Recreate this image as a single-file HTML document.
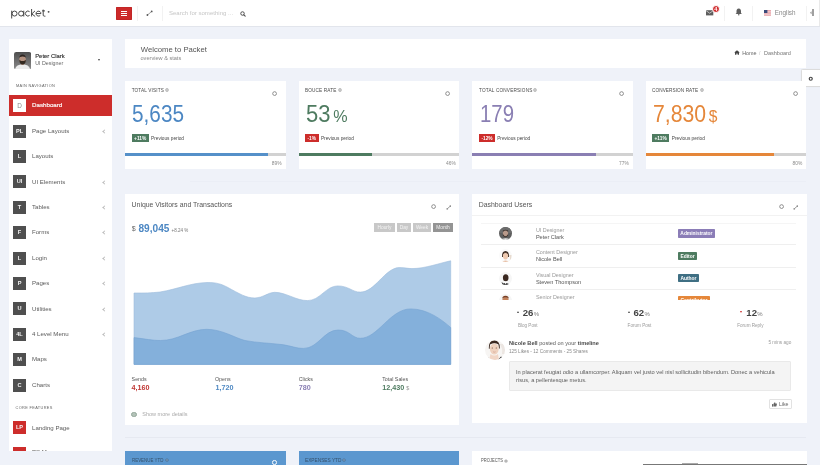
<!DOCTYPE html>
<html><head><meta charset="utf-8">
<style>
*{box-sizing:border-box;margin:0;padding:0}
html,body{width:820px;height:465px;overflow:hidden;background:#eff2f9;font-family:"Liberation Sans",sans-serif;color:#555}
.a{position:absolute;white-space:nowrap}
.card{position:absolute;background:#fff}
.hdr{position:absolute;left:0;top:0;width:820px;height:27px;background:#fff;border-bottom:1px solid #e2e5ec}
.sep{position:absolute;top:6px;width:0.7px;height:15px;background:#f2f2f2}
.ico{position:absolute;left:13px;width:13px;height:13px;background:#4f4f4f;color:#f4f4f4;font-size:5.6px;font-weight:bold;text-align:center;line-height:13px}
.nav{position:absolute;left:32px;font-size:6.1px;color:#5a5a5a;line-height:8px}
.chev{position:absolute;left:102.6px;width:3px;height:3px;border-left:0.6px solid #bbb;border-bottom:0.6px solid #bbb;transform:rotate(45deg)}
.lbl{position:absolute;font-size:4.2px;letter-spacing:0.45px;color:#555;line-height:5px}
.big{position:absolute;font-size:21px;line-height:24px}
.badge{position:absolute;height:8.3px;color:#fff;font-size:4.8px;font-weight:bold;line-height:9.7px;text-align:center}
.prev{position:absolute;font-size:4.75px;color:#484848;line-height:6px}
.bar{position:absolute;height:2.8px;background:#d2d2d2}
.bar i{position:absolute;left:0;top:0;height:100%}
.pct{position:absolute;font-size:4.9px;color:#8a8a8a;line-height:5px}
.circ{position:absolute;width:4.6px;height:4.6px;border:0.9px solid #666;border-radius:50%}
</style></head><body><div id="w" style="position:absolute;left:0;top:0;width:820px;height:465px;overflow:hidden;will-change:transform">

<!-- HEADER -->
<div class="hdr"></div>
<svg class="a" style="left:0;top:0" width="60" height="26" viewBox="0 0 60 26"><g fill="none" stroke="#3e3e3e" stroke-width="0.95">
<path d="M11.7 10.7 L11.7 18.5"/><circle cx="14.55" cy="13.55" r="2.5"/>
<circle cx="21.1" cy="13.55" r="2.5"/><path d="M23.75 10.7 L23.75 16.5"/>
<path d="M29.6 11.7 A2.5 2.5 0 1 0 29.6 15.4"/>
<path d="M31.6 9 L31.6 16.5 M35 10.9 L31.8 13.9 L35.2 16.5"/>
<path d="M36.2 13.55 L40.95 13.55 A2.45 2.45 0 1 0 40.2 15.4"/>
<path d="M43.2 9.6 L43.2 15.2 Q43.2 16.2 44.6 16.2 L45.4 16.2 M42 10.9 L45 10.9"/>
</g><circle cx="48.6" cy="11.85" r="0.95" fill="#4a4a4a"/></svg>
<div class="a" style="left:116.4px;top:7px;width:15.4px;height:13px;background:#cc2a2a;border-radius:1px;box-shadow:inset 0 0 0 0.5px #b82222"></div>
<div class="a" style="left:121.3px;top:10.7px;width:5.8px;height:1px;background:#fff"></div>
<div class="a" style="left:121.3px;top:12.8px;width:5.8px;height:1px;background:#fff"></div>
<div class="a" style="left:121.3px;top:14.9px;width:5.8px;height:1px;background:#fff"></div>
<div class="sep" style="left:136.5px"></div>
<svg class="a" style="left:146px;top:9.5px" width="7" height="7" viewBox="0 0 7 7"><path d="M1.5 5 L5.6 1.5" stroke="#666" stroke-width="0.6"/><circle cx="1.4" cy="5" r="0.9" fill="#555"/><circle cx="5.7" cy="1.4" r="0.9" fill="#555"/></svg>
<div class="sep" style="left:162.3px"></div>
<div class="a" style="left:168.9px;top:10px;font-size:6.05px;line-height:7px;color:#c6c6c6">Search for something ...</div>
<svg class="a" style="left:239.8px;top:10.9px" width="6" height="6" viewBox="0 0 6 6"><circle cx="2.5" cy="2.5" r="1.75" stroke="#505050" stroke-width="1" fill="none"/><path d="M3.8 3.8 L5.2 5.2" stroke="#505050" stroke-width="1.1" stroke-linecap="round"/></svg>

<svg class="a" style="left:706px;top:9.6px" width="8" height="6" viewBox="0 0 8 6"><rect x="0" y="0.2" width="7.3" height="5.2" fill="#5e5e5e"/><path d="M0 0.6 L3.65 3.2 L7.3 0.6" stroke="#fff" stroke-width="0.6" fill="none"/></svg>
<div class="a" style="left:711.6px;top:4.6px;width:8.6px;height:8.6px;border-radius:50%;background:#cf2a2c;border:0.7px solid #fff;color:#fff;font-size:5.6px;font-weight:bold;text-align:center;line-height:7.4px">4</div>
<div class="sep" style="left:724px"></div>
<svg class="a" style="left:735px;top:8.3px" width="7.5" height="8" viewBox="0 0 7.5 8"><path d="M3.75 0.6 C2 0.6 1.5 2 1.5 3.4 L1.5 5 L0.6 6.1 L6.9 6.1 L6 5 L6 3.4 C6 2 5.5 0.6 3.75 0.6Z" fill="#5e5e5e"/><circle cx="3.75" cy="6.8" r="0.75" fill="#5e5e5e"/></svg>
<div class="sep" style="left:752px"></div>
<svg class="a" style="left:763.5px;top:9.8px" width="7.5" height="5.8" viewBox="0 0 7.5 5.8"><rect width="7.5" height="5.8" fill="#e8a0a6"/><rect y="0.9" width="7.5" height="0.8" fill="#f4d5d8"/><rect y="2.6" width="7.5" height="0.8" fill="#f4d5d8"/><rect y="4.3" width="7.5" height="0.8" fill="#f4d5d8"/><rect width="3.4" height="3" fill="#3b4a7a"/></svg>
<div class="a" style="left:774.8px;top:9.3px;font-size:6.3px;line-height:7px;color:#888">English</div>
<div class="sep" style="left:805.8px"></div>
<svg class="a" style="left:809.5px;top:11px" width="2" height="3.6" viewBox="0 0 2 3.6"><path d="M0 1.8 L1.6 0.3 L1.6 3.3Z" fill="#999"/></svg>
<div class="a" style="left:812.3px;top:9.3px;width:1.4px;height:6.5px;background:#a0a0a0"></div>
<div class="a" style="left:819px;top:0;width:1px;height:26px;background:#e9e9e9"></div>

<!-- SIDEBAR -->
<div class="card" style="left:9px;top:39.2px;width:103.1px;height:412.2px"></div>
<svg class="a" style="left:13.7px;top:51.8px" width="17.2" height="17.4" viewBox="0 0 17.2 17.4"><defs><clipPath id="av1"><rect width="17.2" height="17.4" rx="2.2"/></clipPath><linearGradient id="g1" x1="0" y1="0" x2="0" y2="1"><stop offset="0" stop-color="#4e4e4e"/><stop offset="1" stop-color="#8a8a8a"/></linearGradient></defs><g clip-path="url(#av1)"><rect width="17.2" height="17.4" fill="url(#g1)"/><path d="M1 17.4 Q2 12.5 8.6 12.2 Q15.2 12.5 16.2 17.4Z" fill="#ececec"/><rect x="7.2" y="10" width="2.8" height="3" fill="#b89484"/><ellipse cx="8.6" cy="7.6" rx="3.3" ry="4.1" fill="#b3917f"/><path d="M5.3 6.2 Q5.5 2.6 8.6 2.6 Q11.7 2.6 11.9 6.2 L11.2 5 Q8.6 3.8 6 5Z" fill="#2e2622"/><path d="M5.3 7.8 Q5.4 12.6 8.6 12.6 Q11.8 12.6 11.9 7.8 L11 8.6 Q8.6 9.6 6.2 8.6Z" fill="#33291f"/></g></svg>
<div class="a" style="left:35.2px;top:52.6px;font-size:5.9px;line-height:6px;color:#2a2a2a;-webkit-text-stroke:0.12px #2a2a2a">Peter Clark</div>
<div class="a" style="left:35.2px;top:60px;font-size:5.3px;line-height:6px;color:#666">UI Designer</div>
<div class="a" style="left:97.5px;top:59.3px;width:0;height:0;border-left:1.8px solid transparent;border-right:1.8px solid transparent;border-top:2px solid #444"></div>
<div class="lbl" style="left:16px;top:82.8px;font-size:3.9px;letter-spacing:0.33px;color:#666">MAIN NAVIGATION</div>

<div class="a" style="left:9px;top:95.1px;width:103px;height:20.7px;background:#cd2d2b"></div>
<div class="ico" style="top:99.1px;background:#fff;color:#888;font-weight:normal;font-size:6.4px">D</div>
<div class="nav" style="top:101.0px;color:#fff;font-size:6.2px;-webkit-text-stroke:0.15px #fff">Dashboard</div>

<div class="ico" style="top:124.6px">PL</div><div class="nav" style="top:126.7px">Page Layouts</div><div class="chev" style="top:129.8px"></div>
<div class="ico" style="top:150px">L</div><div class="nav" style="top:152.1px">Layouts</div>
<div class="ico" style="top:175.4px">UI</div><div class="nav" style="top:177.5px">UI Elements</div><div class="chev" style="top:180.6px"></div>
<div class="ico" style="top:200.8px">T</div><div class="nav" style="top:202.9px">Tables</div><div class="chev" style="top:206px"></div>
<div class="ico" style="top:226.2px">F</div><div class="nav" style="top:228.3px">Forms</div><div class="chev" style="top:231.4px"></div>
<div class="ico" style="top:251.6px">L</div><div class="nav" style="top:253.7px">Login</div><div class="chev" style="top:256.8px"></div>
<div class="ico" style="top:277px">P</div><div class="nav" style="top:279.1px">Pages</div><div class="chev" style="top:282.2px"></div>
<div class="ico" style="top:302.4px">U</div><div class="nav" style="top:304.5px">Utilities</div><div class="chev" style="top:307.6px"></div>
<div class="ico" style="top:327.8px">4L</div><div class="nav" style="top:329.9px">4 Level Menu</div><div class="chev" style="top:333px"></div>
<div class="ico" style="top:353.2px">M</div><div class="nav" style="top:355.3px">Maps</div>
<div class="ico" style="top:378.6px">C</div><div class="nav" style="top:380.7px">Charts</div>
<div class="lbl" style="left:15.6px;top:405.2px;font-size:3.9px;letter-spacing:0.33px;color:#666">CORE FEATURES</div>
<div class="ico" style="top:421.4px;background:#cd2d2b">LP</div><div class="nav" style="top:423.5px">Landing Page</div>
<div style="position:absolute;left:9px;top:440px;width:103px;height:11.4px;overflow:hidden">
 <div class="ico" style="left:4px;top:7px;background:#cd2d2b">PS</div><div class="nav" style="left:23px;top:8.1px">PS Menu</div>
</div>

<!-- WELCOME -->
<div class="card" style="left:124.8px;top:39.2px;width:681.2px;height:28.8px"></div>
<div class="a" style="left:140.8px;top:45px;font-size:7.7px;line-height:9px;color:#555">Welcome to Packet</div>
<div class="a" style="left:140.5px;top:55px;font-size:5.6px;line-height:6px;color:#888">overview &amp; stats</div>
<svg class="a" style="left:733.8px;top:50.4px" width="6" height="5" viewBox="0 0 6 5"><path d="M3 0.2 L0.2 2.6 L1 2.6 L1 4.8 L2.4 4.8 L2.4 3.4 L3.6 3.4 L3.6 4.8 L5 4.8 L5 2.6 L5.8 2.6Z" fill="#444"/></svg>
<div class="a" style="left:742.2px;top:50.2px;font-size:5.4px;line-height:6px;color:#666">Home</div>
<div class="a" style="left:759px;top:50.2px;font-size:5px;line-height:6px;color:#bbb">/</div>
<div class="a" style="left:764px;top:50.2px;font-size:5.5px;line-height:6px;color:#777">Dashboard</div>
<div class="a" style="left:800.5px;top:69.4px;width:22px;height:18px;background:#fff;border:0.8px solid #dcdcdc;border-radius:1.5px;box-shadow:0 0 1px rgba(0,0,0,0.08)"></div>
<svg class="a" style="left:807.5px;top:75.8px" width="5.5" height="5.5" viewBox="0 0 5.5 5.5"><circle cx="2.75" cy="2.75" r="2.1" fill="#444"/><circle cx="2.75" cy="2.75" r="0.9" fill="#fff"/></svg>

<!-- STAT CARDS -->
<div class="card" style="left:125px;top:81px;width:160.5px;height:88px"></div>
<div class="a" style="left:131.7px;top:87.8px;font-size:4.7px;line-height:6px;color:#4a4a4a;letter-spacing:0.131px">TOTAL VISITS</div>
<svg class="a" style="left:165.2px;top:88.1px" width="4" height="4" viewBox="0 0 4 4"><circle cx="2" cy="2" r="1.65" fill="#999"/><circle cx="2" cy="2" r="0.9" fill="#ddd"/></svg>
<svg class="a" style="left:271.9px;top:91.3px" width="5.2" height="5.2" viewBox="0 0 5.2 5.2"><circle cx="2.6" cy="2.6" r="1.9" stroke="#707070" stroke-width="0.75" fill="none"/></svg>
<div class="a" style="left:132.29999999999998px;top:100.6px;font-size:23.2px;line-height:26px;color:#4c87c3;transform-origin:0 0;transform:scaleX(0.896)">5,635</div>
<div class="badge" style="left:131.6px;top:134.1px;width:17.2px;background:#4e7b60">+11%</div>
<div class="prev" style="left:151px;top:135.5px">Previous period</div>
<div class="bar" style="left:125px;top:153.2px;width:160.5px"><i style="width:143.2px;background:#5590c9"></i></div>
<div class="pct" style="left:271.8px;top:160.8px">89%</div>

<div class="card" style="left:298.5px;top:81px;width:160.5px;height:88px"></div>
<div class="a" style="left:304.9px;top:87.8px;font-size:4.7px;line-height:6px;color:#4a4a4a;letter-spacing:0.159px">BOUCE RATE</div>
<svg class="a" style="left:337.8px;top:88.1px" width="4" height="4" viewBox="0 0 4 4"><circle cx="2" cy="2" r="1.65" fill="#999"/><circle cx="2" cy="2" r="0.9" fill="#ddd"/></svg>
<svg class="a" style="left:445.4px;top:91.3px" width="5.2" height="5.2" viewBox="0 0 5.2 5.2"><circle cx="2.6" cy="2.6" r="1.9" stroke="#707070" stroke-width="0.75" fill="none"/></svg>
<div class="a" style="left:305.5px;top:100.6px;font-size:23.2px;line-height:26px;color:#4e7b60;transform-origin:0 0;transform:scaleX(0.949)">53<span style="font-size:17px;margin-left:3px">%</span></div>
<div class="badge" style="left:304.9px;top:134.1px;width:13.8px;background:#cd2d2b">-1%</div>
<div class="prev" style="left:320.9px;top:135.5px">Previous period</div>
<div class="bar" style="left:298.5px;top:153.2px;width:160.5px"><i style="width:73.8px;background:#4e7b60"></i></div>
<div class="pct" style="left:446px;top:160.8px">46%</div>

<div class="card" style="left:472px;top:81px;width:160.5px;height:88px"></div>
<div class="a" style="left:479px;top:87.8px;font-size:4.7px;line-height:6px;color:#4a4a4a;letter-spacing:0.184px">TOTAL CONVERSIONS</div>
<svg class="a" style="left:533.2px;top:88.1px" width="4" height="4" viewBox="0 0 4 4"><circle cx="2" cy="2" r="1.65" fill="#999"/><circle cx="2" cy="2" r="0.9" fill="#ddd"/></svg>
<svg class="a" style="left:619.0px;top:91.3px" width="5.2" height="5.2" viewBox="0 0 5.2 5.2"><circle cx="2.6" cy="2.6" r="1.9" stroke="#707070" stroke-width="0.75" fill="none"/></svg>
<div class="a" style="left:479.6px;top:100.6px;font-size:23.2px;line-height:26px;color:#8a7fb3;transform-origin:0 0;transform:scaleX(0.878)">179</div>
<div class="badge" style="left:479px;top:134.1px;width:16px;background:#cd2d2b">-12%</div>
<div class="prev" style="left:497.2px;top:135.5px">Previous period</div>
<div class="bar" style="left:472px;top:153.2px;width:160.5px"><i style="width:123.6px;background:#8a7fb3"></i></div>
<div class="pct" style="left:619px;top:160.8px">77%</div>

<div class="card" style="left:645.5px;top:81px;width:160.5px;height:88px"></div>
<div class="a" style="left:652px;top:87.8px;font-size:4.7px;line-height:6px;color:#4a4a4a;letter-spacing:0.074px">CONVERSION RATE</div>
<svg class="a" style="left:699.7px;top:88.1px" width="4" height="4" viewBox="0 0 4 4"><circle cx="2" cy="2" r="1.65" fill="#999"/><circle cx="2" cy="2" r="0.9" fill="#ddd"/></svg>
<svg class="a" style="left:792.6px;top:91.3px" width="5.2" height="5.2" viewBox="0 0 5.2 5.2"><circle cx="2.6" cy="2.6" r="1.9" stroke="#707070" stroke-width="0.75" fill="none"/></svg>
<div class="a" style="left:652.6px;top:100.6px;font-size:23.2px;line-height:26px;color:#e5873a;transform-origin:0 0;transform:scaleX(0.915)">7,830<span style="font-size:17px;margin-left:3px">$</span></div>
<div class="badge" style="left:652px;top:134.1px;width:17.2px;background:#4e7b60">+11%</div>
<div class="prev" style="left:671.8px;top:135.5px">Previous period</div>
<div class="bar" style="left:645.5px;top:153.2px;width:160.5px"><i style="width:128.4px;background:#e5873a"></i></div>
<div class="pct" style="left:792.5px;top:160.8px">80%</div>

<!-- CHART CARD -->
<div class="card" style="left:124.8px;top:193.6px;width:334.7px;height:231px"></div>
<div class="a" style="left:131.6px;top:199.8px;font-size:6.9px;line-height:9px;color:#555">Unique Visitors and Transactions</div>
<svg class="a" style="left:431.4px;top:204.4px" width="5.2" height="5.2" viewBox="0 0 5.2 5.2"><circle cx="2.6" cy="2.6" r="1.9" stroke="#707070" stroke-width="0.75" fill="none"/></svg>
<svg class="a" style="left:445.8px;top:204.5px" width="5.5" height="5" viewBox="0 0 5.5 5"><path d="M1.2 3.9 L4.3 1.1" stroke="#555" stroke-width="0.6"/><path d="M0.5 4.6 L0.8 2.9 L2.2 4.3Z M5 0.4 L4.7 2.1 L3.3 0.7Z" fill="#555"/></svg>
<div class="a" style="left:131.8px;top:225.4px;font-size:7px;line-height:8px;color:#666">$</div>
<div class="a" style="left:138.5px;top:223.2px;font-size:10.1px;line-height:12px;color:#4c87c3;font-weight:bold">89,045</div>
<div class="a" style="left:171.6px;top:227.8px;font-size:4.5px;line-height:6px;color:#777">+8.24 %</div>
<div class="a" style="left:374px;top:222.9px;width:20.9px;height:8.7px;background:#c8c8c8;color:#f4f4f4;font-size:4.8px;line-height:9.2px;text-align:center">Hourly</div>
<div class="a" style="left:396.9px;top:222.9px;width:14.1px;height:8.7px;background:#c8c8c8;color:#f4f4f4;font-size:4.8px;line-height:9.2px;text-align:center">Day</div>
<div class="a" style="left:413px;top:222.9px;width:18px;height:8.7px;background:#c8c8c8;color:#f4f4f4;font-size:4.8px;line-height:9.2px;text-align:center">Week</div>
<div class="a" style="left:433.1px;top:222.9px;width:19.7px;height:8.7px;background:#949494;color:#f4f4f4;font-size:4.8px;line-height:9.2px;text-align:center">Month</div>

<svg class="a" style="left:0;top:0" width="820" height="465" viewBox="0 0 820 465">
<path id="light" fill="#aecbe7" stroke="#9dbcdc" stroke-width="0.6" d="M134 293 C146 293 150 293 160 292 C178 289 190 283 207 282.5 C217 282.5 221 284 227 287 C240 294 246 298 255 298 C263 298 268 292.3 274.5 292.3 C286 292.3 296 300.6 307.5 300.6 C320 300.6 326 285.9 337.5 285.9 C349 285.9 352 292.1 360.3 292.1 C375 292.1 385 268 399 267.6 C405 267.5 408 268.6 412 268.6 C425 268.6 440 263 450.7 260.8 L450.7 364.4 L134 364.4Z"/>
<path id="dark" fill="#84b0db" stroke="#76a3d1" stroke-width="0.6" d="M134 337.6 C146 339 152 340.5 160.5 340.5 C178 340.5 190 329.3 206.7 329.3 C222 329.3 235 338 245 340.5 C258 343 270 343 282 344.6 C292 346 296 348.4 303.6 348.4 C318 348.4 324 330 338 330 C350 330 352 338.3 360.3 338.3 C378 338.3 390 308.9 410.7 308.9 C428 308.9 442 320 450.7 327.5 L450.7 364.4 L134 364.4Z"/>
</svg>

<div class="a" style="left:131.6px;top:375.8px;font-size:5.3px;line-height:6px;color:#555">Sends</div>
<div class="a" style="left:131.6px;top:383.5px;font-size:7.2px;line-height:8px;color:#bf3532;font-weight:bold">4,160</div>
<div class="a" style="left:215px;top:375.8px;font-size:5.3px;line-height:6px;color:#555">Opens</div>
<div class="a" style="left:215.5px;top:383.5px;font-size:7.2px;line-height:8px;color:#4e88c2;font-weight:bold">1,720</div>
<div class="a" style="left:298.8px;top:375.8px;font-size:5.3px;line-height:6px;color:#555">Clicks</div>
<div class="a" style="left:298.8px;top:383.5px;font-size:7.2px;line-height:8px;color:#8a7fb3;font-weight:bold">780</div>
<div class="a" style="left:382.2px;top:375.8px;font-size:5.3px;line-height:6px;color:#555">Total Sales</div>
<div class="a" style="left:382.2px;top:383.5px;font-size:7.2px;line-height:8px;color:#4e7b60;font-weight:bold">12,430 <span style="font-weight:normal;color:#999;font-size:5.5px">$</span></div>
<div class="a" style="left:131.4px;top:411.7px;width:5.2px;height:5.2px;border-radius:50%;background:#b3c2b8;border:0.9px solid #92a699"></div>
<div class="a" style="left:142.3px;top:410.8px;font-size:5.5px;line-height:6.5px;color:#aaa">Show more details</div>

<!-- USERS CARD -->
<div class="card" style="left:472px;top:193.6px;width:334.8px;height:229.9px"></div>
<div class="a" style="left:478.7px;top:200.2px;font-size:6.9px;line-height:9px;color:#555">Dashboard Users</div>
<svg class="a" style="left:778.5px;top:204.3px" width="5.2" height="5.2" viewBox="0 0 5.2 5.2"><circle cx="2.6" cy="2.6" r="1.9" stroke="#707070" stroke-width="0.75" fill="none"/></svg>
<svg class="a" style="left:792.6px;top:204.5px" width="5.5" height="5" viewBox="0 0 5.5 5"><path d="M1.2 3.9 L4.3 1.1" stroke="#555" stroke-width="0.6"/><path d="M0.5 4.6 L0.8 2.9 L2.2 4.3Z M5 0.4 L4.7 2.1 L3.3 0.7Z" fill="#555"/></svg>
<div class="a" style="left:472px;top:215.2px;width:334.8px;height:0.7px;background:#f2f2f2"></div>
<div style="position:absolute;left:481.3px;top:223px;width:315px;height:76.7px;overflow:hidden">
 <div class="a" style="left:0;top:0px;width:315px;height:0.7px;background:#f5f5f5"></div>
 <div class="a" style="left:0;top:21.2px;width:315px;height:0.7px;background:#efefef"></div>
 <div class="a" style="left:0;top:43.9px;width:315px;height:0.7px;background:#efefef"></div>
 <div class="a" style="left:0;top:66.4px;width:315px;height:0.7px;background:#efefef"></div>
 <svg class="a" style="left:18.0px;top:3.7px" width="13" height="13" viewBox="0 0 13 13"><defs><clipPath id="c1"><circle cx="6.5" cy="6.5" r="6.5"/></clipPath></defs><g clip-path="url(#c1)"><rect width="13" height="13" fill="#5e5e5e"/><path d="M0 0 L13 0 L13 6 L0 6Z" fill="#6c6c6c"/><ellipse cx="6.5" cy="6.6" rx="2.6" ry="3.3" fill="#b8998a"/><path d="M3.9 5 Q6.5 2.2 9.1 5 L9.1 3.6 Q6.5 2 3.9 3.6Z" fill="#3b302b"/><path d="M3.9 7 Q6.5 11.5 9.1 7 L9.1 8.8 Q6.5 11.5 3.9 8.8Z" fill="#3b302b"/><path d="M0.5 13 Q6.5 9.3 12.5 13Z" fill="#eeeeee"/></g></svg>
 <div class="a" style="left:54.6px;top:3.8px;font-size:5.4px;line-height:6px;color:#9a9a9a">UI Designer</div>
 <div class="a" style="left:54.6px;top:11px;font-size:5.6px;line-height:6px;color:#555">Peter Clark</div>
 <div class="badge" style="left:196.8px;top:6px;width:36.6px;background:#8b7db7;border-radius:0.8px;height:8.5px;line-height:9.1px;font-size:4.9px">Administrator</div>
 <svg class="a" style="left:18.0px;top:26.0px" width="13" height="13" viewBox="0 0 13 13"><defs><clipPath id="c2"><circle cx="6.5" cy="6.5" r="6.5"/></clipPath></defs><g clip-path="url(#c2)"><rect width="13" height="13" fill="#fafafa"/><path d="M3 8 Q2.8 2 6.5 2 Q10.2 2 10 8Z" fill="#3a2a22"/><ellipse cx="6.5" cy="7" rx="2.6" ry="3.4" fill="#eec9b0"/><path d="M3.9 5 Q6.5 3 9.1 5 L9.1 3.8 Q6.5 2.6 3.9 3.8Z" fill="#3a2a22"/><path d="M2 13 Q6.5 9.8 11 13Z" fill="#e8c0a6"/><path d="M10 6 Q12 9 10.5 12 L12.5 12 L12.5 6Z" fill="#e8dcd0"/></g></svg>
 <div class="a" style="left:54.6px;top:26.1px;font-size:5.4px;line-height:6px;color:#9a9a9a">Content Designer</div>
 <div class="a" style="left:54.6px;top:33.4px;font-size:5.6px;line-height:6px;color:#555">Nicole Bell</div>
 <div class="badge" style="left:196.8px;top:28.6px;width:18.9px;background:#4e7b60;border-radius:0.8px;height:8.5px;line-height:9.1px;font-size:4.9px">Editor</div>
 <svg class="a" style="left:18.0px;top:48.7px" width="13" height="13" viewBox="0 0 13 13"><defs><clipPath id="c3"><circle cx="6.5" cy="6.5" r="6.5"/></clipPath></defs><g clip-path="url(#c3)"><rect width="13" height="13" fill="#f6f6f6"/><ellipse cx="6.7" cy="5.8" rx="2.8" ry="3.5" fill="#3a2820"/><path d="M1.5 13 Q6.5 9 11.5 13Z" fill="#2a2a2a"/><path d="M5.6 9.8 L6.6 13 L7.6 9.8Z" fill="#fff"/><path d="M2.5 10 L4.2 11.2 L3.5 12.2Z" fill="#222"/></g></svg>
 <div class="a" style="left:54.6px;top:48.8px;font-size:5.4px;line-height:6px;color:#9a9a9a">Visual Designer</div>
 <div class="a" style="left:54.6px;top:56.1px;font-size:5.6px;line-height:6px;color:#555">Steven Thompson</div>
 <div class="badge" style="left:196.8px;top:50.9px;width:20.8px;background:#3f6f83;border-radius:0.8px;height:8.5px;line-height:9.1px;font-size:4.9px">Author</div>
 <svg class="a" style="left:18.0px;top:71.0px" width="13" height="13" viewBox="0 0 13 13"><defs><clipPath id="c4"><circle cx="6.5" cy="6.5" r="6.5"/></clipPath></defs><g clip-path="url(#c4)"><rect width="13" height="13" fill="#f6f6f6"/><ellipse cx="6.5" cy="7" rx="3.2" ry="3.8" fill="#c4825a"/><path d="M3 6 Q3 1.8 6.5 1.8 Q10 1.8 10 6 L10 4.5 Q6.5 2.6 3 4.5Z" fill="#7a3f22"/></g></svg>
 <div class="a" style="left:54.6px;top:70.7px;font-size:5.4px;line-height:6px;color:#9a9a9a">Senior Designer</div>
 <div class="a" style="left:54.6px;top:78px;font-size:5.6px;line-height:6px;color:#555">Chris Evans</div>
 <div class="badge" style="left:196.8px;top:72.9px;width:31.8px;background:#e5873a;border-radius:0.8px;height:8.5px;line-height:9.1px;font-size:4.9px">Contributor</div>
</div>

<!-- user stats -->
<div class="a" style="left:517.1px;top:311px;width:0;height:0;border-left:1.6px solid transparent;border-right:1.6px solid transparent;border-bottom:2.1px solid #444"></div>
<div class="a" style="left:522.7px;top:306.6px;font-size:9.6px;line-height:12px;color:#444;font-weight:bold">26<span style="font-size:6px;font-weight:normal;color:#777;margin-left:0.3px">%</span></div>
<div class="a" style="left:517.9px;top:322.5px;font-size:4.6px;line-height:6px;color:#9a9a9a">Blog Post</div>
<div class="a" style="left:627.9px;top:311px;width:0;height:0;border-left:1.6px solid transparent;border-right:1.6px solid transparent;border-bottom:2.1px solid #444"></div>
<div class="a" style="left:633.5px;top:306.6px;font-size:9.6px;line-height:12px;color:#444;font-weight:bold">62<span style="font-size:6px;font-weight:normal;color:#777;margin-left:0.3px">%</span></div>
<div class="a" style="left:627.6px;top:322.5px;font-size:4.6px;line-height:6px;color:#9a9a9a">Forum Post</div>
<div class="a" style="left:740.2px;top:311.1px;width:0;height:0;border-left:1.6px solid transparent;border-right:1.6px solid transparent;border-top:2.1px solid #cd2d2b"></div>
<div class="a" style="left:746.3px;top:306.6px;font-size:9.6px;line-height:12px;color:#444;font-weight:bold">12<span style="font-size:6px;font-weight:normal;color:#777;margin-left:0.3px">%</span></div>
<div class="a" style="left:737.2px;top:322.5px;font-size:4.6px;line-height:6px;color:#9a9a9a">Forum Reply</div>

<!-- post -->
<svg class="a" style="left:484.9px;top:339.9px" width="20" height="20" viewBox="0 0 20 20"><defs><clipPath id="c5"><circle cx="10" cy="10" r="10"/></clipPath></defs><g clip-path="url(#c5)"><rect width="20" height="20" fill="#f7f5f3"/><path d="M14.5 4 Q18 8 17 14 L20 14 L20 4Z" fill="#ece6e2"/><path d="M3.8 8.5 Q3.6 0.3 9.4 0.5 Q15 0.5 14.8 8 L14 9 L13.5 4.5 Q9.5 2 5 4.5 L4.6 9Z" fill="#3a2820"/><ellipse cx="9.3" cy="9" rx="4.4" ry="5.6" fill="#efd2bf"/><path d="M5.5 14 Q9.3 17 13 14 L14 20 L4 20Z" fill="#f1d6c6"/><ellipse cx="7.3" cy="8" rx="0.8" ry="0.45" fill="#6b4a3a"/><ellipse cx="11.3" cy="8" rx="0.8" ry="0.45" fill="#6b4a3a"/><path d="M8 11.8 Q9.3 12.5 10.6 11.8" stroke="#c98e80" stroke-width="0.5" fill="none"/><path d="M13 20 L16 16.5 L17.5 17.5 L15 20Z" fill="#2a2a2a"/><path d="M2 19 L3.8 17.5 L4.4 18.5Z" fill="#333"/></g></svg>
<div class="a" style="left:509px;top:340.3px;font-size:5.6px;line-height:7px;color:#5a5a5a"><b style="color:#4a4a4a">Nicole Bell</b> posted on your <b style="color:#4a4a4a">timeline</b></div>
<div class="a" style="left:509px;top:349.1px;font-size:4.7px;line-height:6px;color:#8a8a8a">125 Likes - 12 Comments - 25 Shares</div>
<div class="a" style="left:768.4px;top:340.3px;font-size:4.7px;line-height:6px;color:#999">5 mins ago</div>
<div class="a" style="left:509px;top:361.4px;width:282.4px;height:29.2px;background:#f4f4f4;border:0.6px solid #e9e9e9;border-radius:1px"></div>
<div class="a" style="left:516px;top:368.8px;font-size:5.68px;line-height:7.8px;color:#606060">In placerat feugiat odio a ullamcorper. Aliquam vel justo vel nisl sollicitudin bibendum. Donec a vehicula<br>risus, a pellentesque metus.</div>
<div class="a" style="left:769.3px;top:399.1px;width:22.4px;height:9.5px;background:#fff;border:0.6px solid #e2e2e2;border-radius:1px"></div>
<svg class="a" style="left:772px;top:401.5px" width="5" height="5" viewBox="0 0 5 5"><rect x="0" y="2.1" width="1.1" height="2.5" fill="#666"/><path d="M1.4 2.1 L2.7 0.2 Q3.5 0.1 3.3 1.5 L4.7 1.5 Q5 1.7 4.9 2.2 L4.3 4.6 L1.4 4.6Z" fill="#666"/></svg>
<div class="a" style="left:778.9px;top:400.8px;font-size:5.2px;line-height:6.5px;color:#666">Like</div>

<!-- separator -->
<div class="a" style="left:190px;top:181px;width:616px;height:0.5px;background:#e8ebf3;opacity:0.6"></div>
<div class="a" style="left:125px;top:437px;width:681px;height:0.6px;background:#e6e9f1"></div>

<!-- BOTTOM CARDS -->
<div class="a" style="left:125px;top:450.5px;width:160.5px;height:20px;background:#5b97cf"></div>
<div class="a" style="left:131.7px;top:457.6px;font-size:4.9px;line-height:6px;color:#34506b;transform-origin:0 0;transform:scaleX(0.906)">REVENUE YTD</div><svg class="a" style="left:165.3px;top:458.1px" width="4" height="4" viewBox="0 0 4 4"><circle cx="2" cy="2" r="1.6" fill="#4a6a88"/><circle cx="2" cy="2" r="0.8" fill="#8fb5da"/></svg>
<div class="circ" style="left:272.2px;top:460.3px;border-color:#fff"></div>
<div class="a" style="left:298.5px;top:450.5px;width:160.5px;height:20px;background:#5b97cf"></div>
<div class="a" style="left:304.8px;top:457.6px;font-size:4.9px;line-height:6px;color:#34506b;transform-origin:0 0;transform:scaleX(0.974)">EXPENSES YTD</div><svg class="a" style="left:342.2px;top:458.1px" width="4" height="4" viewBox="0 0 4 4"><circle cx="2" cy="2" r="1.6" fill="#4a6a88"/><circle cx="2" cy="2" r="0.8" fill="#8fb5da"/></svg>
<div class="card" style="left:472px;top:450.8px;width:335px;height:20px"></div>
<div class="a" style="left:481px;top:458.3px;font-size:4.9px;line-height:6px;color:#555;transform-origin:0 0;transform:scaleX(0.842)">PROJECTS</div><svg class="a" style="left:503.5px;top:459.2px" width="4" height="4" viewBox="0 0 4 4"><circle cx="2" cy="2" r="1.6" fill="#999"/><circle cx="2" cy="2" r="0.8" fill="#ddd"/></svg>
<div class="a" style="left:643px;top:463.8px;width:164px;height:2px;background:#777"></div>
<div class="a" style="left:682px;top:462.8px;width:16px;height:1px;background:#aaa"></div>

</div></body></html>
